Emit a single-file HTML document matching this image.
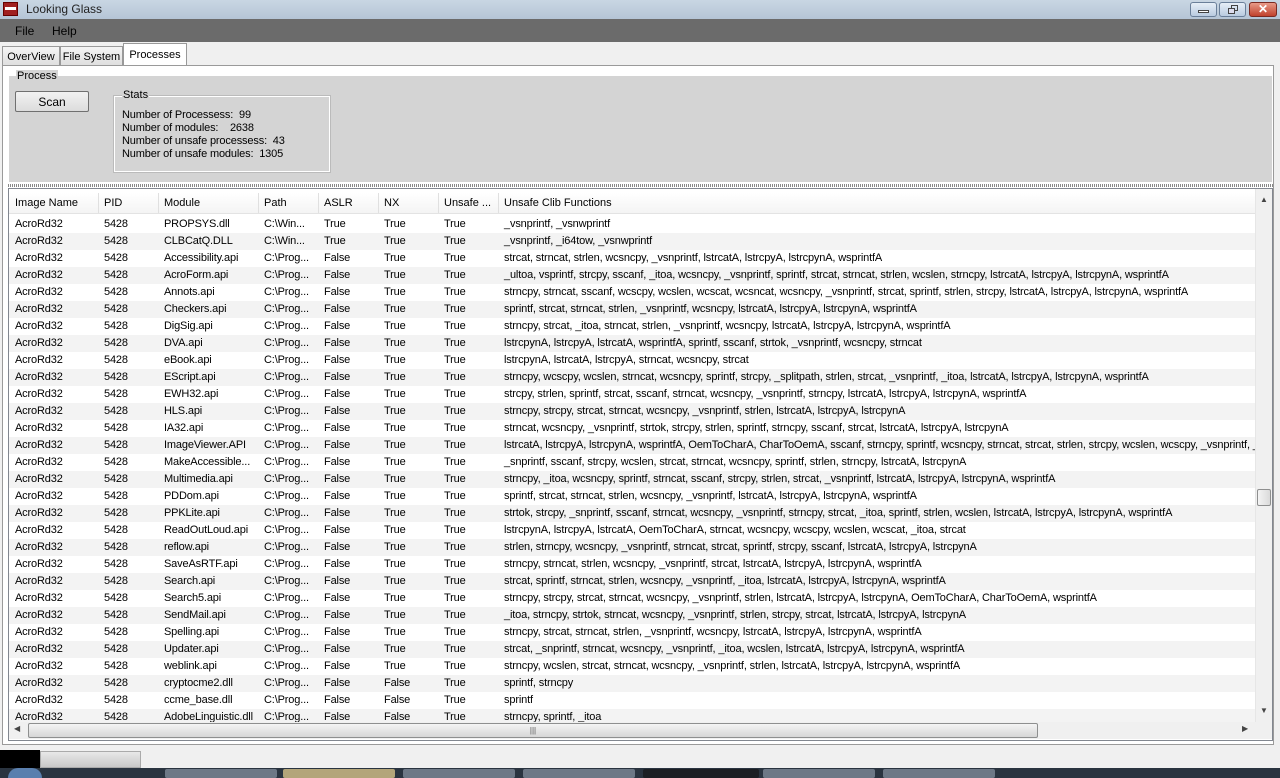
<!DOCTYPE html>
<html><head><meta charset="utf-8"><style>
*{box-sizing:border-box;margin:0;padding:0}
body{width:1280px;height:778px;overflow:hidden;background:#f0f0f0;font-family:"Liberation Sans",sans-serif;font-size:11px;color:#000;position:relative}
.abs{position:absolute}
#title{left:0;top:0;width:1280px;height:19px;background:linear-gradient(#c9d6e3,#b5c5d6);font-size:12px}
#menu{left:0;top:19px;width:1280px;height:23px;background:#6b6b6b;font-size:12px}
#tabs{left:0;top:42px;width:1280px;height:24px;background:#f0f0f0}
.tab{position:absolute;top:4px;height:20px;border:1px solid #999;border-bottom:none;background:linear-gradient(#f4f4f4,#dedede);font-size:11px;padding:4px 0 0 0;text-align:center;white-space:nowrap}
#panel{left:2px;top:65px;width:1272px;height:680px;border:1px solid #9a9a9a;background:#fff}
#grp{left:8px;top:75px;width:1265px;height:108px;background:#d4d4d4;border:1px solid #fff}
#list{left:8px;top:188px;width:1265px;height:553px;border:1px solid #828790;background:#fff;overflow:hidden}
.row{position:absolute;left:0;width:1246px;height:17px;white-space:nowrap;letter-spacing:-0.15px}
.row span{position:absolute;top:2px}
.hdr{top:4px;height:21px;background:linear-gradient(#fff,#f4f4f4);border-bottom:1px solid #e3e3e3;letter-spacing:0}
.hdr span{top:4px}
.sep{position:absolute;top:0;width:1px;height:20px;background:#e0e0e0}
.c0{left:6px}.c1{left:95px}.c2{left:155px}.c3{left:255px}.c4{left:315px}.c5{left:375px}.c6{left:435px}.c7{left:495px}
.g{background:#f3f3f3}
</style></head><body>
<div id="title" class="abs">
 <div class="abs" style="left:3px;top:2px;width:15px;height:14px;background:#a02020;border:1px solid #600"><div style="margin:4px 1px;height:3px;background:#fff"></div></div>
 <span class="abs" style="left:26px;top:2px;color:#222">Looking Glass</span>
 <div class="abs" style="left:1190px;top:2px;width:27px;height:15px;border:1px solid #6a7f99;border-radius:3px;background:linear-gradient(#e6eef7,#b9cbe0)"><div style="margin:7px 7px;height:3px;border:1px solid #444;background:#fff"></div></div>
 <div class="abs" style="left:1219px;top:2px;width:27px;height:15px;border:1px solid #6a7f99;border-radius:3px;background:linear-gradient(#e6eef7,#b9cbe0)"><div class="abs" style="left:11px;top:2px;width:7px;height:6px;border:1px solid #444"></div><div class="abs" style="left:8px;top:5px;width:7px;height:6px;border:1px solid #444;background:#dde"></div></div>
 <div class="abs" style="left:1249px;top:2px;width:28px;height:15px;border:1px solid #7a2a22;border-radius:3px;background:linear-gradient(#e89a88,#c0412c);color:#fff;text-align:center;font-weight:bold;font-size:12px;line-height:13px">✕</div>
</div>
<div id="menu" class="abs"><span class="abs" style="left:15px;top:5px">File</span><span class="abs" style="left:52px;top:5px">Help</span></div>
<div id="tabs" class="abs">
 <div class="tab" style="left:2px;width:58px">OverView</div>
 <div class="tab" style="left:60px;width:63px">File System</div>
 <div class="tab" style="left:123px;top:1px;height:24px;width:64px;background:#fff;padding-top:5px">Processes</div>
</div>
<div id="panel" class="abs"></div>
<div id="grp" class="abs">
 <span class="abs" style="left:7px;top:-6px;font-size:11px;background:#d4d4d4;padding:0 1px">Process</span>
 <div class="abs" style="left:6px;top:15px;width:74px;height:21px;border:1px solid #707070;border-radius:2px;background:linear-gradient(#f2f2f2,#dcdcdc);font-size:12px;text-align:center;padding-top:3px">Scan</div>
 <div class="abs" style="left:105px;top:20px;width:216px;height:76px;border:1px solid #fff;outline:1px solid #bbb"></div>
 <span class="abs" style="left:113px;top:13px;font-size:11px;background:#d4d4d4;padding:0 1px">Stats</span>
 <div class="abs" style="left:113px;top:33px;line-height:13px;font-size:11px;letter-spacing:-0.15px">Number of Processess:&nbsp; 99<br>Number of modules:&nbsp;&nbsp;&nbsp; 2638<br>Number of unsafe processess:&nbsp; 43<br>Number of unsafe modules:&nbsp; 1305</div>
</div>
<div class="abs" style="left:8px;top:184px;width:1265px;height:3px;background:repeating-linear-gradient(90deg,#888 0 1px,#fff 1px 2px)"></div>
<div id="list" class="abs">
 <div class="row hdr"><span class="c0">Image Name</span><span class="c1">PID</span><span class="c2">Module</span><span class="c3">Path</span><span class="c4">ASLR</span><span class="c5">NX</span><span class="c6">Unsafe ...</span><span class="c7">Unsafe Clib Functions</span>
 <i class="sep" style="left:89px"></i><i class="sep" style="left:149px"></i><i class="sep" style="left:249px"></i><i class="sep" style="left:309px"></i><i class="sep" style="left:369px"></i><i class="sep" style="left:429px"></i><i class="sep" style="left:489px"></i></div>
 <div class="row" style="top:27px"><span class="c0">AcroRd32</span><span class="c1">5428</span><span class="c2">PROPSYS.dll</span><span class="c3">C:\Win...</span><span class="c4">True</span><span class="c5">True</span><span class="c6">True</span><span class="c7">_vsnprintf, _vsnwprintf</span></div>
 <div class="row g" style="top:44px"><span class="c0">AcroRd32</span><span class="c1">5428</span><span class="c2">CLBCatQ.DLL</span><span class="c3">C:\Win...</span><span class="c4">True</span><span class="c5">True</span><span class="c6">True</span><span class="c7">_vsnprintf, _i64tow, _vsnwprintf</span></div>
 <div class="row" style="top:61px"><span class="c0">AcroRd32</span><span class="c1">5428</span><span class="c2">Accessibility.api</span><span class="c3">C:\Prog...</span><span class="c4">False</span><span class="c5">True</span><span class="c6">True</span><span class="c7">strcat, strncat, strlen, wcsncpy, _vsnprintf, lstrcatA, lstrcpyA, lstrcpynA, wsprintfA</span></div>
 <div class="row g" style="top:78px"><span class="c0">AcroRd32</span><span class="c1">5428</span><span class="c2">AcroForm.api</span><span class="c3">C:\Prog...</span><span class="c4">False</span><span class="c5">True</span><span class="c6">True</span><span class="c7">_ultoa, vsprintf, strcpy, sscanf, _itoa, wcsncpy, _vsnprintf, sprintf, strcat, strncat, strlen, wcslen, strncpy, lstrcatA, lstrcpyA, lstrcpynA, wsprintfA</span></div>
 <div class="row" style="top:95px"><span class="c0">AcroRd32</span><span class="c1">5428</span><span class="c2">Annots.api</span><span class="c3">C:\Prog...</span><span class="c4">False</span><span class="c5">True</span><span class="c6">True</span><span class="c7">strncpy, strncat, sscanf, wcscpy, wcslen, wcscat, wcsncat, wcsncpy, _vsnprintf, strcat, sprintf, strlen, strcpy, lstrcatA, lstrcpyA, lstrcpynA, wsprintfA</span></div>
 <div class="row g" style="top:112px"><span class="c0">AcroRd32</span><span class="c1">5428</span><span class="c2">Checkers.api</span><span class="c3">C:\Prog...</span><span class="c4">False</span><span class="c5">True</span><span class="c6">True</span><span class="c7">sprintf, strcat, strncat, strlen, _vsnprintf, wcsncpy, lstrcatA, lstrcpyA, lstrcpynA, wsprintfA</span></div>
 <div class="row" style="top:129px"><span class="c0">AcroRd32</span><span class="c1">5428</span><span class="c2">DigSig.api</span><span class="c3">C:\Prog...</span><span class="c4">False</span><span class="c5">True</span><span class="c6">True</span><span class="c7">strncpy, strcat, _itoa, strncat, strlen, _vsnprintf, wcsncpy, lstrcatA, lstrcpyA, lstrcpynA, wsprintfA</span></div>
 <div class="row g" style="top:146px"><span class="c0">AcroRd32</span><span class="c1">5428</span><span class="c2">DVA.api</span><span class="c3">C:\Prog...</span><span class="c4">False</span><span class="c5">True</span><span class="c6">True</span><span class="c7">lstrcpynA, lstrcpyA, lstrcatA, wsprintfA, sprintf, sscanf, strtok, _vsnprintf, wcsncpy, strncat</span></div>
 <div class="row" style="top:163px"><span class="c0">AcroRd32</span><span class="c1">5428</span><span class="c2">eBook.api</span><span class="c3">C:\Prog...</span><span class="c4">False</span><span class="c5">True</span><span class="c6">True</span><span class="c7">lstrcpynA, lstrcatA, lstrcpyA, strncat, wcsncpy, strcat</span></div>
 <div class="row g" style="top:180px"><span class="c0">AcroRd32</span><span class="c1">5428</span><span class="c2">EScript.api</span><span class="c3">C:\Prog...</span><span class="c4">False</span><span class="c5">True</span><span class="c6">True</span><span class="c7">strncpy, wcscpy, wcslen, strncat, wcsncpy, sprintf, strcpy, _splitpath, strlen, strcat, _vsnprintf, _itoa, lstrcatA, lstrcpyA, lstrcpynA, wsprintfA</span></div>
 <div class="row" style="top:197px"><span class="c0">AcroRd32</span><span class="c1">5428</span><span class="c2">EWH32.api</span><span class="c3">C:\Prog...</span><span class="c4">False</span><span class="c5">True</span><span class="c6">True</span><span class="c7">strcpy, strlen, sprintf, strcat, sscanf, strncat, wcsncpy, _vsnprintf, strncpy, lstrcatA, lstrcpyA, lstrcpynA, wsprintfA</span></div>
 <div class="row g" style="top:214px"><span class="c0">AcroRd32</span><span class="c1">5428</span><span class="c2">HLS.api</span><span class="c3">C:\Prog...</span><span class="c4">False</span><span class="c5">True</span><span class="c6">True</span><span class="c7">strncpy, strcpy, strcat, strncat, wcsncpy, _vsnprintf, strlen, lstrcatA, lstrcpyA, lstrcpynA</span></div>
 <div class="row" style="top:231px"><span class="c0">AcroRd32</span><span class="c1">5428</span><span class="c2">IA32.api</span><span class="c3">C:\Prog...</span><span class="c4">False</span><span class="c5">True</span><span class="c6">True</span><span class="c7">strncat, wcsncpy, _vsnprintf, strtok, strcpy, strlen, sprintf, strncpy, sscanf, strcat, lstrcatA, lstrcpyA, lstrcpynA</span></div>
 <div class="row g" style="top:248px"><span class="c0">AcroRd32</span><span class="c1">5428</span><span class="c2">ImageViewer.API</span><span class="c3">C:\Prog...</span><span class="c4">False</span><span class="c5">True</span><span class="c6">True</span><span class="c7">lstrcatA, lstrcpyA, lstrcpynA, wsprintfA, OemToCharA, CharToOemA, sscanf, strncpy, sprintf, wcsncpy, strncat, strcat, strlen, strcpy, wcslen, wcscpy, _vsnprintf, _</span></div>
 <div class="row" style="top:265px"><span class="c0">AcroRd32</span><span class="c1">5428</span><span class="c2">MakeAccessible...</span><span class="c3">C:\Prog...</span><span class="c4">False</span><span class="c5">True</span><span class="c6">True</span><span class="c7">_snprintf, sscanf, strcpy, wcslen, strcat, strncat, wcsncpy, sprintf, strlen, strncpy, lstrcatA, lstrcpynA</span></div>
 <div class="row g" style="top:282px"><span class="c0">AcroRd32</span><span class="c1">5428</span><span class="c2">Multimedia.api</span><span class="c3">C:\Prog...</span><span class="c4">False</span><span class="c5">True</span><span class="c6">True</span><span class="c7">strncpy, _itoa, wcsncpy, sprintf, strncat, sscanf, strcpy, strlen, strcat, _vsnprintf, lstrcatA, lstrcpyA, lstrcpynA, wsprintfA</span></div>
 <div class="row" style="top:299px"><span class="c0">AcroRd32</span><span class="c1">5428</span><span class="c2">PDDom.api</span><span class="c3">C:\Prog...</span><span class="c4">False</span><span class="c5">True</span><span class="c6">True</span><span class="c7">sprintf, strcat, strncat, strlen, wcsncpy, _vsnprintf, lstrcatA, lstrcpyA, lstrcpynA, wsprintfA</span></div>
 <div class="row g" style="top:316px"><span class="c0">AcroRd32</span><span class="c1">5428</span><span class="c2">PPKLite.api</span><span class="c3">C:\Prog...</span><span class="c4">False</span><span class="c5">True</span><span class="c6">True</span><span class="c7">strtok, strcpy, _snprintf, sscanf, strncat, wcsncpy, _vsnprintf, strncpy, strcat, _itoa, sprintf, strlen, wcslen, lstrcatA, lstrcpyA, lstrcpynA, wsprintfA</span></div>
 <div class="row" style="top:333px"><span class="c0">AcroRd32</span><span class="c1">5428</span><span class="c2">ReadOutLoud.api</span><span class="c3">C:\Prog...</span><span class="c4">False</span><span class="c5">True</span><span class="c6">True</span><span class="c7">lstrcpynA, lstrcpyA, lstrcatA, OemToCharA, strncat, wcsncpy, wcscpy, wcslen, wcscat, _itoa, strcat</span></div>
 <div class="row g" style="top:350px"><span class="c0">AcroRd32</span><span class="c1">5428</span><span class="c2">reflow.api</span><span class="c3">C:\Prog...</span><span class="c4">False</span><span class="c5">True</span><span class="c6">True</span><span class="c7">strlen, strncpy, wcsncpy, _vsnprintf, strncat, strcat, sprintf, strcpy, sscanf, lstrcatA, lstrcpyA, lstrcpynA</span></div>
 <div class="row" style="top:367px"><span class="c0">AcroRd32</span><span class="c1">5428</span><span class="c2">SaveAsRTF.api</span><span class="c3">C:\Prog...</span><span class="c4">False</span><span class="c5">True</span><span class="c6">True</span><span class="c7">strncpy, strncat, strlen, wcsncpy, _vsnprintf, strcat, lstrcatA, lstrcpyA, lstrcpynA, wsprintfA</span></div>
 <div class="row g" style="top:384px"><span class="c0">AcroRd32</span><span class="c1">5428</span><span class="c2">Search.api</span><span class="c3">C:\Prog...</span><span class="c4">False</span><span class="c5">True</span><span class="c6">True</span><span class="c7">strcat, sprintf, strncat, strlen, wcsncpy, _vsnprintf, _itoa, lstrcatA, lstrcpyA, lstrcpynA, wsprintfA</span></div>
 <div class="row" style="top:401px"><span class="c0">AcroRd32</span><span class="c1">5428</span><span class="c2">Search5.api</span><span class="c3">C:\Prog...</span><span class="c4">False</span><span class="c5">True</span><span class="c6">True</span><span class="c7">strncpy, strcpy, strcat, strncat, wcsncpy, _vsnprintf, strlen, lstrcatA, lstrcpyA, lstrcpynA, OemToCharA, CharToOemA, wsprintfA</span></div>
 <div class="row g" style="top:418px"><span class="c0">AcroRd32</span><span class="c1">5428</span><span class="c2">SendMail.api</span><span class="c3">C:\Prog...</span><span class="c4">False</span><span class="c5">True</span><span class="c6">True</span><span class="c7">_itoa, strncpy, strtok, strncat, wcsncpy, _vsnprintf, strlen, strcpy, strcat, lstrcatA, lstrcpyA, lstrcpynA</span></div>
 <div class="row" style="top:435px"><span class="c0">AcroRd32</span><span class="c1">5428</span><span class="c2">Spelling.api</span><span class="c3">C:\Prog...</span><span class="c4">False</span><span class="c5">True</span><span class="c6">True</span><span class="c7">strncpy, strcat, strncat, strlen, _vsnprintf, wcsncpy, lstrcatA, lstrcpyA, lstrcpynA, wsprintfA</span></div>
 <div class="row g" style="top:452px"><span class="c0">AcroRd32</span><span class="c1">5428</span><span class="c2">Updater.api</span><span class="c3">C:\Prog...</span><span class="c4">False</span><span class="c5">True</span><span class="c6">True</span><span class="c7">strcat, _snprintf, strncat, wcsncpy, _vsnprintf, _itoa, wcslen, lstrcatA, lstrcpyA, lstrcpynA, wsprintfA</span></div>
 <div class="row" style="top:469px"><span class="c0">AcroRd32</span><span class="c1">5428</span><span class="c2">weblink.api</span><span class="c3">C:\Prog...</span><span class="c4">False</span><span class="c5">True</span><span class="c6">True</span><span class="c7">strncpy, wcslen, strcat, strncat, wcsncpy, _vsnprintf, strlen, lstrcatA, lstrcpyA, lstrcpynA, wsprintfA</span></div>
 <div class="row g" style="top:486px"><span class="c0">AcroRd32</span><span class="c1">5428</span><span class="c2">cryptocme2.dll</span><span class="c3">C:\Prog...</span><span class="c4">False</span><span class="c5">False</span><span class="c6">True</span><span class="c7">sprintf, strncpy</span></div>
 <div class="row" style="top:503px"><span class="c0">AcroRd32</span><span class="c1">5428</span><span class="c2">ccme_base.dll</span><span class="c3">C:\Prog...</span><span class="c4">False</span><span class="c5">False</span><span class="c6">True</span><span class="c7">sprintf</span></div>
 <div class="row g" style="top:520px"><span class="c0">AcroRd32</span><span class="c1">5428</span><span class="c2">AdobeLinguistic.dll</span><span class="c3">C:\Prog...</span><span class="c4">False</span><span class="c5">False</span><span class="c6">True</span><span class="c7">strncpy, sprintf, _itoa</span></div>
 <div class="abs" style="left:1246px;top:0;width:17px;height:533px;background:#f0f0f0;border-left:1px solid #e6e6e6">
  <div class="abs" style="left:4px;top:6px;font-size:8px;color:#444">▲</div>
  <div class="abs" style="left:1px;top:300px;width:14px;height:17px;border:1px solid #8e8f8f;border-radius:2px;background:linear-gradient(90deg,#f4f4f4,#dadada)"></div>
  <div class="abs" style="left:4px;top:517px;font-size:8px;color:#444">▼</div>
 </div>
 <div class="abs" style="left:0;top:533px;width:1263px;height:17px;background:#f0f0f0">
  <div class="abs" style="left:5px;top:2px;font-size:8px;color:#444">◀</div>
  <div class="abs" style="left:19px;top:1px;width:1010px;height:15px;border:1px solid #8e8f8f;border-radius:2px;background:linear-gradient(#f4f4f4,#d6d6d6);text-align:center;font-size:8px;line-height:13px;color:#555">|||</div>
  <div class="abs" style="left:1233px;top:2px;font-size:8px;color:#444">▶</div>
 </div>
</div>
<div class="abs" style="left:0;top:750px;width:40px;height:18px;background:#000"></div>
<div class="abs" style="left:40px;top:751px;width:101px;height:17px;border:1px solid #aaa;background:linear-gradient(#e8e8e8,#c8c8c8)"></div>
<div class="abs" style="left:0;top:768px;width:1280px;height:10px;background:#2a3440">
 <div class="abs" style="left:8px;top:0;width:34px;height:10px;border-radius:17px 17px 0 0;background:#5a7fae"></div>
 <div class="abs" style="left:165px;top:1px;width:112px;height:9px;background:#6d7886;border-radius:2px"></div>
 <div class="abs" style="left:283px;top:1px;width:112px;height:9px;background:#b3a57a;border-radius:2px"></div>
 <div class="abs" style="left:403px;top:1px;width:112px;height:9px;background:#6d7886;border-radius:2px"></div>
 <div class="abs" style="left:523px;top:1px;width:112px;height:9px;background:#6d7886;border-radius:2px"></div>
 <div class="abs" style="left:643px;top:1px;width:116px;height:9px;background:#1c1f24;border-radius:2px"></div>
 <div class="abs" style="left:763px;top:1px;width:112px;height:9px;background:#6d7886;border-radius:2px"></div>
 <div class="abs" style="left:883px;top:1px;width:112px;height:9px;background:#6d7886;border-radius:2px"></div>
</div>
</body></html>
